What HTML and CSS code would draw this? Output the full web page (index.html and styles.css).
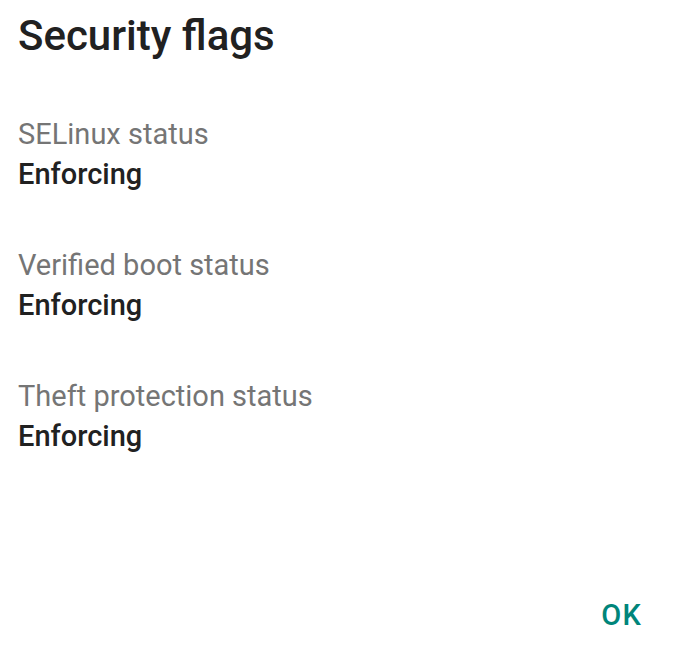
FILE: index.html
```html
<!DOCTYPE html>
<html>
<head>
<meta charset="utf-8">
<link rel="stylesheet" href="styles.css">
</head>
<body>
<div class="dialog">
  <h1 class="title">Security flags</h1>
  <div class="list">
    <div class="item">
      <div class="label">SELinux status</div>
      <div class="value">Enforcing</div>
    </div>
    <div class="item">
      <div class="label">Verified boot status</div>
      <div class="value">Enforcing</div>
    </div>
    <div class="item">
      <div class="label">Theft protection status</div>
      <div class="value">Enforcing</div>
    </div>
  </div>
  <div class="actions">
    <button class="btn">OK</button>
  </div>
</div>
</body>
</html>
```

FILE: styles.css
```css
html, body {
  margin: 0;
  padding: 0;
  background: #ffffff;
}
.dialog {
  width: 700px;
  height: 664px;
  box-sizing: border-box;
  padding: 12px 0 0 18px;
  font-family: Roboto, "Liberation Sans", sans-serif;
  display: flex;
  flex-direction: column;
}
.title {
  margin: 0;
  font-size: 42px;
  line-height: 48px;
  font-weight: 500;
  color: #212121;
}
.list {
  display: flex;
  flex-direction: column;
  gap: 51px;
  margin-top: 54px;
}
.item {
  display: flex;
  flex-direction: column;
}
.label {
  font-size: 29px;
  line-height: 40px;
  color: #757575;
}
.value {
  font-size: 29px;
  line-height: 40px;
  font-weight: 500;
  color: #212121;
}
.actions {
  margin-top: auto;
  display: flex;
  justify-content: flex-end;
  padding: 0 58px 34px 0;
}
.btn {
  border: 0;
  background: none;
  padding: 0;
  font-family: Roboto, "Liberation Sans", sans-serif;
  font-size: 29px;
  line-height: 30px;
  font-weight: 500;
  letter-spacing: 1.2px;
  color: #00857a;
}
```
